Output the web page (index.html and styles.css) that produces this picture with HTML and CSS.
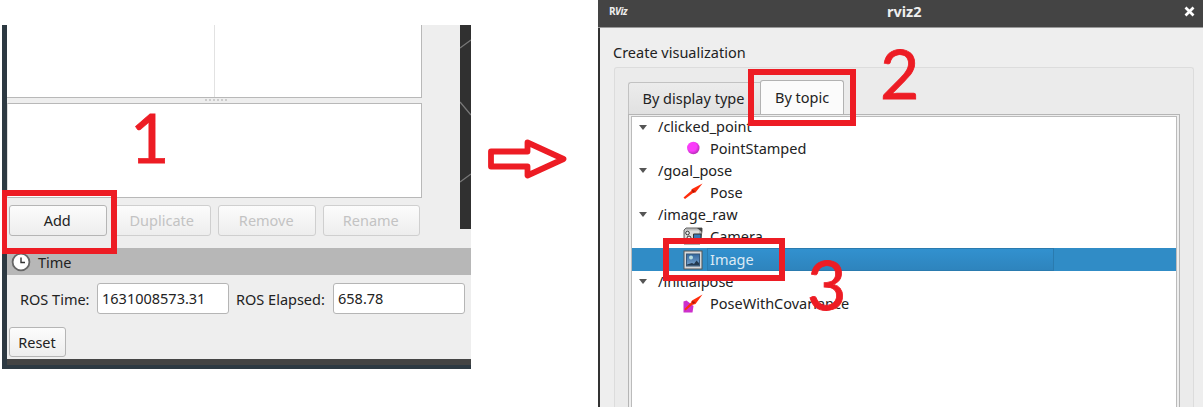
FILE: index.html
```html
<!DOCTYPE html>
<html lang="en">
<head>
<meta charset="utf-8">
<title>rviz2</title>
<link rel="stylesheet" href="styles.css">
</head>
<body>
<main class="stage">
  <section class="main-window">
    <div class="window-body">
      <div class="upper">
        <div class="displays">
          <div class="tree-pane"><div class="tree-name"></div><div class="tree-value"></div></div>
          <div class="splitter"><i></i><i></i><i></i><i></i><i></i><i></i></div>
          <div class="description"></div>
          <div class="buttons">
            <button class="button">Add</button>
            <button class="button disabled">Duplicate</button>
            <button class="button disabled">Remove</button>
            <button class="button disabled">Rename</button>
          </div>
        </div>
        <svg class="viewport" width="11" height="204" viewBox="0 0 11 204">
          <rect width="11" height="204" fill="#303030"/>
          <path d="M0 23L11 15M0 77L11 90M0 157L11 149" stroke="#777" stroke-width="1.4" fill="none"/>
        </svg>
      </div>
      <div class="time-header">
        <svg width="20" height="20" viewBox="0 0 20 20">
          <circle cx="10" cy="10" r="8.4" fill="#fff" stroke="#666" stroke-width="1.8"/>
          <path d="M10 5.5V10.5H14" fill="none" stroke="#333" stroke-width="1.4"/>
        </svg>
        <span>Time</span>
      </div>
      <div class="time-row">
        <label class="time-label">ROS Time:</label><div class="field">1631008573.31</div>
        <label class="elapsed-label">ROS Elapsed:</label><div class="field elapsed">658.78</div>
      </div>
      <button class="button reset">Reset</button>
    </div>
    <div class="window-bottom"></div>
  </section>

  <svg class="arrow" width="82" height="42" viewBox="0 0 82 42">
    <path d="M5 14.500H41.500V5.500L77.500 22L41.500 38.500V29.500H5Z" fill="#fff" stroke="#ed1c24" stroke-width="5.800" stroke-linejoin="round"/>
  </svg>

  <section class="dialog">
    <header class="titlebar">
      <span class="logo">R<i>Viz</i></span>
      <span class="title">rviz2</span>
      <svg class="close" width="11" height="11" viewBox="0 0 11 11"><path d="M1.500 1.500L9.500 9.500M9.500 1.500L1.500 9.500" stroke="#fff" stroke-width="2.700"/></svg>
    </header>
    <div class="dialog-body">
      <div class="group-title">Create visualization</div>
      <div class="group">
        <nav class="tabs">
          <div class="tab">By display type</div>
          <div class="tab active">By topic</div>
        </nav>
        <div class="pane">
          <div class="topics">
            <div class="row topic"><i class="caret"></i>/clicked_point</div>
            <div class="row type"><svg width="20" height="20" viewBox="0 0 20 20"><defs><radialGradient id="ball" cx=".4" cy=".38" r=".65"><stop offset=".55" stop-color="#fa3cfa"/><stop offset="1" stop-color="#b32bb3"/></radialGradient></defs><circle cx="10.300" cy="10" r="6.200" fill="url(#ball)"/></svg>PointStamped</div>
            <div class="row topic"><i class="caret"></i>/goal_pose</div>
            <div class="row type"><svg width="20" height="20" viewBox="0 0 20 20"><path d="M.5 15.500L8 9L9 7L19.500 1.500L12.500 10.500L10 11L2 17Z" fill="#ff2d0c"/><path d="M8.500 7.500L12.500 9L10 11Z" fill="#a91608"/></svg>Pose</div>
            <div class="row topic"><i class="caret"></i>/image_raw</div>
            <div class="row type"><svg width="20" height="20" viewBox="0 0 20 20"><path d="M1 4L3 2H19V5L17 18H1Z" fill="#bbb" stroke="#666"/><path d="M2 4.500H16V17H2Z" fill="#ddd"/><path d="M14 2H19V6Z" fill="#444"/><circle cx="4.500" cy="7" r="1.800" fill="#eee" stroke="#333"/><circle cx="6" cy="12" r="2" fill="#eee" stroke="#333"/><path d="M10.500 8H18V16H10.500Z" fill="#3977b5" stroke="#333"/></svg>Camera</div>
            <div class="row type selected"><svg width="20" height="20" viewBox="0 0 20 20"><defs><linearGradient id="sky" x2="0" y2="1"><stop stop-color="#32679e"/><stop offset="1" stop-color="#7da7cf"/></linearGradient></defs><rect x="1" y="1" width="18" height="18" fill="#d6d8da" stroke="#555"/><rect x="3.500" y="4" width="13" height="12" fill="url(#sky)" stroke="#365879"/><circle cx="8" cy="7.500" r="2" fill="#b5dce0"/><path d="M4 14.500L9 13L11 14L13.500 10.500L16 13V15.500H4Z" fill="#243a50"/></svg><span class="selected-cell">Image</span></div>
            <div class="row topic"><i class="caret"></i>/initialpose</div>
            <div class="row type"><svg width="20" height="20" viewBox="0 0 20 20"><path d="M.5 8.500L3.500 7.500L10.500 13L9.500 19.500H.5Z" fill="#cc30cc"/><path d="M1.500 16L8 9.500L9 7.500L19.500 1.500L12.500 11L9 12L2.500 17.500Z" fill="#ff2d0c"/><path d="M8.500 8L12.500 9L10 11Z" fill="#a91608"/></svg>PoseWithCovariance</div>
          </div>
        </div>
      </div>
    </div>
  </section>

  <div class="mark mark-add"></div>
  <div class="mark mark-tab"></div>
  <div class="mark mark-image"></div>
  <div class="step step-1">1</div>
  <div class="step step-2">2</div>
  <div class="step step-3">3</div>
</main>
</body>
</html>
```
FILE: styles.css
```css
* { box-sizing: border-box; }
body { margin: 0; background: #fff; color: #222; font: 14.5px/22px "Noto Sans", sans-serif; }
.stage { position: relative; display: flex; width: 1203px; height: 408px; overflow: hidden; }

.main-window { width: 469px; height: 344px; margin: 25px 0 0 2px; flex: none; display: flex; flex-direction: column; padding-left: 5px; background: #2d3942; }
.window-body { height: 334px; flex: none; background: #eee; }
.upper { display: flex; justify-content: space-between; height: 223px; }
.displays { width: 415px; }
.tree-pane { display: flex; height: 73px; background: #fff; border: solid #b8b8b8; border-width: 0 1px 1px 0; }
.tree-name { width: 208px; border-right: 1px solid #e2e2e2; }
.splitter { display: flex; justify-content: center; gap: 2px; height: 5px; padding: 1px 0 0 2px; }
.splitter i { width: 2px; height: 2px; background: #ccc; }
.description { height: 95px; background: #fff; border: 1px solid #b8b8b8; border-left-color: #ddd; }
.buttons { display: flex; gap: 7px; padding: 7px 0 0 2px; }
.button { width: 97.5px; height: 31px; padding: 0 1px 1px 0; border: 1px solid #b5b5b5; border-radius: 3px; background: linear-gradient(#fcfcfc, #ededed); color: #222; font: inherit; }
.disabled { color: #c3c3c3; border-color: #cfcfcf; }
.viewport { display: block; }
.time-header { display: flex; align-items: center; gap: 7px; height: 27px; padding-left: 4px; background: #b7b7b7; }
.time-row { display: flex; align-items: center; height: 31px; margin-top: 8px; }
.time-label { width: 90px; padding: 1px 0 0 13px; white-space: nowrap; }
.field { width: 132px; height: 31px; border: 1px solid #b5b5b5; border-radius: 3px; padding: 3px 0 0 4px; background: #fff; }
.elapsed-label { width: 104px; padding: 1px 0 0 7px; white-space: nowrap; }
.reset { display: block; width: 57px; height: 30px; margin: 13px 0 0 2px; }
.window-bottom { height: 6px; background: #444; }

.arrow { flex: none; margin: 137px 0 0 15px; }

.dialog { width: 605px; height: 407px; margin-left: 30px; flex: none; display: flex; flex-direction: column; }
.titlebar { display: flex; align-items: center; height: 28px; padding: 0 8px 5px 11px; background: #444; border-bottom: 1px solid #999; color: #eee; }
.logo { width: 278px; font: bold 10px/12px "Open Sans", sans-serif; letter-spacing: -0.5px; }
.title { flex: 1; font-weight: bold; }
.dialog-body { flex: 1; padding: 13px 9px 0 14px; border-left: 2px solid #333; background: #eee; }
.group-title { height: 26px; margin-left: -1px; }
.group { height: 340px; padding: 12px 13px 0; border: 1px solid #dcdcdc; border-bottom: 0; border-radius: 3px 3px 0 0; background: #ebebeb; }
.tabs { display: flex; align-items: flex-end; height: 34px; }
.tab { width: 132px; height: 32px; padding: 4px 0 0 13.5px; border: 1px solid #c2c2c2; border-right: 0; border-bottom: 0; border-radius: 3px 0 0 0; background: linear-gradient(#ececec, #e1e1e1); white-space: nowrap; }
.active { width: 84px; height: 34px; padding: 5px 0 0 14px; border: 1px solid #b2b2b2; border-bottom: 0; border-radius: 3px 3px 0 0; background: #fbfbfb; }
.pane { height: 293px; padding: 1px 2px 0; border: 1px solid #b5b5b5; border-bottom: 0; background: #eee; }
.topics { height: 291px; border: 1px solid #bbb; border-bottom: 0; background: #fff; }
.row { display: flex; align-items: center; height: 22px; }
.topics .row:first-child { height: 21px; }
.topic { gap: 11px; padding: 0 0 3px 7px; }
.type { gap: 7px; padding: 0 0 3px 51px; }
.type svg { flex: none; }
.caret { margin-top: 2px; border: solid transparent; border-width: 5px 4.5px 0; border-top-color: #555; }
.selected { height: 23px; padding-bottom: 0; background: #308cc6; color: #dceaf4; }
.selected-cell { width: 347px; height: 23px; margin-left: -3px; padding-left: 2px; border: 1px solid #2a7baf; background: linear-gradient(#3291cf, #2e84bd); line-height: 21px; }

.mark { position: absolute; border: 6px solid #ed1c24; }
.mark-add { left: 2px; top: 190px; width: 115px; height: 64px; border-left-width: 5px; }
.mark-tab { left: 748px; top: 69px; width: 108px; height: 57px; }
.mark-image { left: 663px; top: 238px; width: 122px; height: 43px; }
.step { position: absolute; color: #ed1c24; font: 68px/70px Lato, sans-serif; -webkit-text-stroke: 0.8px #ed1c24; }
.step-1 { left: 130px; top: 102px; }
.step-2 { left: 880px; top: 38px; }
.step-3 { left: 807px; top: 249px; }
```
